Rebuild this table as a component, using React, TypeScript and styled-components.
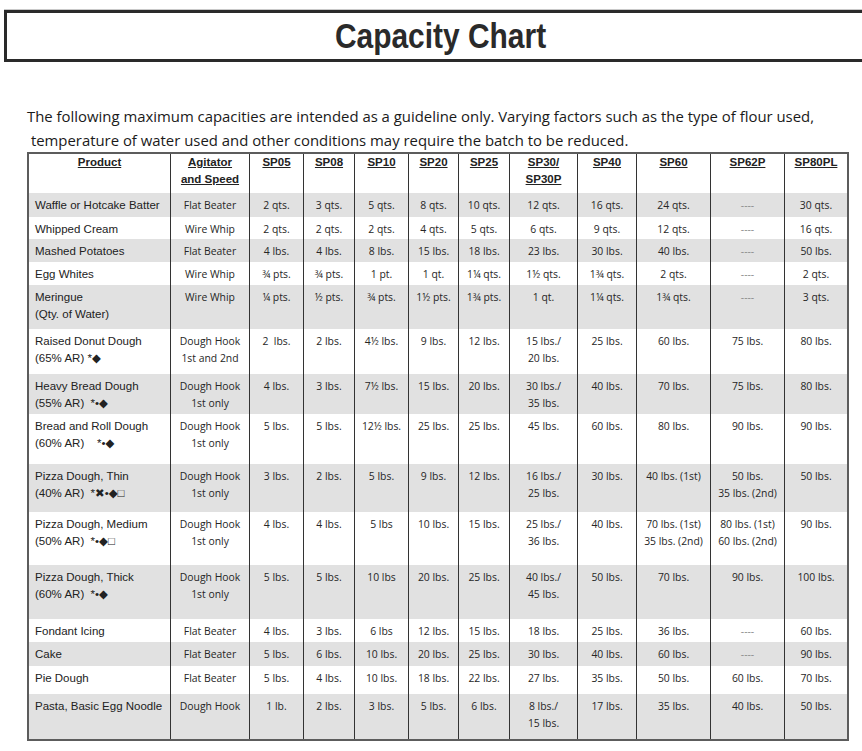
import React from 'react';
import styled, { createGlobalStyle } from 'styled-components';

interface ChartRow {
  product: string;
  agitator: string;
  values: string[];
  height: number;
}

const GlobalStyle = createGlobalStyle`
  html, body {
    margin: 0;
    padding: 0;
    background: #fff;
  }
`;

const Page = styled.div`
  width: 862px;
  height: 751px;
  overflow: hidden;
  padding-top: 10px;
  box-sizing: border-box;
`;

const TitleBar = styled.header`
  margin-left: 4px;
  width: 873px;
  height: 52px;
  box-sizing: border-box;
  border: 3px solid #2a2a2a;
  box-shadow: 0 -1px 0 #c9c9c9;
  display: flex;
  align-items: center;
  justify-content: center;
`;

// no narrow face installed, so the bold sans is squeezed to the condensed look
const Title = styled.h1`
  margin: 0;
  display: inline-block;
  transform: scaleX(0.855);
  font-family: 'Liberation Sans', Arial, sans-serif;
  font-weight: 700;
  font-size: 35px;
  line-height: 40px;
  color: #2a2a2a;
`;

const Intro = styled.p`
  margin: 42px 0 0 27px;
  font-family: 'Open Sans', sans-serif;
  font-size: 14.9px;
  line-height: 24px;
  color: #1a1a1a;
  white-space: nowrap;
`;

const Chart = styled.table`
  margin-left: 27px;
  width: 822px;
  table-layout: fixed;
  border-collapse: separate;
  border-spacing: 0;
  border: 2px solid #5c5c5c;
`;

const HeadRow = styled.tr`
  height: 39px;
  background: #fff;
`;

const HeadCell = styled.th`
  border-left: 1px solid #333;
  &:first-child {
    border-left: none;
  }
  padding: 0 2px;
  vertical-align: top;
  font-family: 'Liberation Sans', Arial, sans-serif;
  font-weight: 700;
  font-size: 11.5px;
  line-height: 17px;
  text-decoration: underline;
  text-underline-offset: 1px;
  color: #222;
`;

const Row = styled.tr<{ $shade: boolean; $h: number }>`
  height: ${p => p.$h}px;
  background: ${p => (p.$shade ? '#e1e1e1' : '#fff')};
`;

const ProductCell = styled.td`
  padding: 4px 2px 0 6px;
  vertical-align: top;
  text-align: left;
  white-space: pre;
  font-family: 'Liberation Sans', Arial, 'DejaVu Sans', sans-serif;
  font-size: 11.5px;
  line-height: 17px;
  color: #222;
`;

const ValueCell = styled.td<{ $muted?: boolean }>`
  border-left: 1px solid #333;
  padding: 4px 1px 0;
  vertical-align: top;
  text-align: center;
  white-space: pre;
  font-family: 'Open Sans', sans-serif;
  font-size: 10.4px;
  line-height: 17px;
  color: ${p => (p.$muted ? '#8a8a8a' : '#262626')};
`;

const columnWidths = [141, 79, 54, 51, 54, 50, 51, 68, 59, 74, 74, 63];

const headers = [
  'Product',
  'Agitator\nand Speed',
  'SP05',
  'SP08',
  'SP10',
  'SP20',
  'SP25',
  'SP30/\nSP30P',
  'SP40',
  'SP60',
  'SP62P',
  'SP80PL',
];

const rows: ChartRow[] = [
  {
    product: 'Waffle or Hotcake Batter',
    agitator: 'Flat Beater',
    values: ['2 qts.', '3 qts.', '5 qts.', '8 qts.', '10 qts.', '12 qts.', '16 qts.', '24 qts.', '----', '30 qts.'],
    height: 24,
  },
  {
    product: 'Whipped Cream',
    agitator: 'Wire Whip',
    values: ['2 qts.', '2 qts.', '2 qts.', '4 qts.', '5 qts.', '6 qts.', '9 qts.', '12 qts.', '----', '16 qts.'],
    height: 22,
  },
  {
    product: 'Mashed Potatoes',
    agitator: 'Flat Beater',
    values: ['4 lbs.', '4 lbs.', '8 lbs.', '15 lbs.', '18 lbs.', '23 lbs.', '30 lbs.', '40 lbs.', '----', '50 lbs.'],
    height: 23,
  },
  {
    product: 'Egg Whites',
    agitator: 'Wire Whip',
    values: ['¾ pts.', '¾ pts.', '1 pt.', '1 qt.', '1¼ qts.', '1½ qts.', '1¾ qts.', '2 qts.', '----', '2 qts.'],
    height: 23,
  },
  {
    product: 'Meringue\n(Qty. of Water)',
    agitator: 'Wire Whip',
    values: ['¼ pts.', '½ pts.', '¾ pts.', '1½ pts.', '1¾ pts.', '1 qt.', '1¼ qts.', '1¾ qts.', '----', '3 qts.'],
    height: 44,
  },
  {
    product: 'Raised Donut Dough\n(65% AR) *◆',
    agitator: 'Dough Hook\n1st and 2nd',
    values: ['2  lbs.', '2 lbs.', '4½ lbs.', '9 lbs.', '12 lbs.', '15 lbs./\n20 lbs.', '25 lbs.', '60 lbs.', '75 lbs.', '80 lbs.'],
    height: 45,
  },
  {
    product: 'Heavy Bread Dough\n(55% AR)  *•◆',
    agitator: 'Dough Hook\n1st only',
    values: ['4 lbs.', '3 lbs.', '7½ lbs.', '15 lbs.', '20 lbs.', '30 lbs./\n35 lbs.', '40 lbs.', '70 lbs.', '75 lbs.', '80 lbs.'],
    height: 40,
  },
  {
    product: 'Bread and Roll Dough\n(60% AR)    *•◆',
    agitator: 'Dough Hook\n1st only',
    values: ['5 lbs.', '5 lbs.', '12½ lbs.', '25 lbs.', '25 lbs.', '45 lbs.', '60 lbs.', '80 lbs.', '90 lbs.', '90 lbs.'],
    height: 50,
  },
  {
    product: 'Pizza Dough, Thin\n(40% AR)  *✖•◆□',
    agitator: 'Dough Hook\n1st only',
    values: ['3 lbs.', '2 lbs.', '5 lbs.', '9 lbs.', '12 lbs.', '16 lbs./\n25 lbs.', '30 lbs.', '40 lbs. (1st)', '50 lbs.\n35 lbs. (2nd)', '50 lbs.'],
    height: 48,
  },
  {
    product: 'Pizza Dough, Medium\n(50% AR)  *•◆□',
    agitator: 'Dough Hook\n1st only',
    values: ['4 lbs.', '4 lbs.', '5 lbs', '10 lbs.', '15 lbs.', '25 lbs./\n36 lbs.', '40 lbs.', '70 lbs. (1st)\n35 lbs. (2nd)', '80 lbs. (1st)\n60 lbs. (2nd)', '90 lbs.'],
    height: 53,
  },
  {
    product: 'Pizza Dough, Thick\n(60% AR)  *•◆',
    agitator: 'Dough Hook\n1st only',
    values: ['5 lbs.', '5 lbs.', '10 lbs', '20 lbs.', '25 lbs.', '40 lbs./\n45 lbs.', '50 lbs.', '70 lbs.', '90 lbs.', '100 lbs.'],
    height: 54,
  },
  {
    product: 'Fondant Icing',
    agitator: 'Flat Beater',
    values: ['4 lbs.', '3 lbs.', '6 lbs', '12 lbs.', '15 lbs.', '18 lbs.', '25 lbs.', '36 lbs.', '----', '60 lbs.'],
    height: 23,
  },
  {
    product: 'Cake',
    agitator: 'Flat Beater',
    values: ['5 lbs.', '6 lbs.', '10 lbs.', '20 lbs.', '25 lbs.', '30 lbs.', '40 lbs.', '60 lbs.', '----', '90 lbs.'],
    height: 24,
  },
  {
    product: 'Pie Dough',
    agitator: 'Flat Beater',
    values: ['5 lbs.', '4 lbs.', '10 lbs.', '18 lbs.', '22 lbs.', '27 lbs.', '35 lbs.', '50 lbs.', '60 lbs.', '70 lbs.'],
    height: 28,
  },
  {
    product: 'Pasta, Basic Egg Noodle',
    agitator: 'Dough Hook',
    values: ['1 lb.', '2 lbs.', '3 lbs.', '5 lbs.', '6 lbs.', '8 lbs./\n15 lbs.', '17 lbs.', '35 lbs.', '40 lbs.', '50 lbs.'],
    height: 45,
  },
];

export default function App() {
  return (
    <>
      <GlobalStyle />
      <Page>
        <TitleBar>
          <Title>Capacity Chart</Title>
        </TitleBar>
        <Intro>
          The following maximum capacities are intended as a guideline only. Varying factors such as the type of flour used,
          <br />
          {'\u00a0'}temperature of water used and other conditions may require the batch to be reduced.
        </Intro>
        <Chart>
          <colgroup>
            {columnWidths.map((w, i) => (
              <col key={i} style={{ width: w }} />
            ))}
          </colgroup>
          <thead>
            <HeadRow>
              {headers.map(h => (
                <HeadCell key={h}>
                  {h.split('\n').map((line, i) => (
                    <React.Fragment key={i}>
                      {i > 0 && <br />}
                      {line}
                    </React.Fragment>
                  ))}
                </HeadCell>
              ))}
            </HeadRow>
          </thead>
          <tbody>
            {rows.map((row, i) => (
              <Row key={row.product} $shade={i % 2 === 0} $h={row.height}>
                <ProductCell>{row.product}</ProductCell>
                <ValueCell>{row.agitator}</ValueCell>
                {row.values.map((v, j) => (
                  <ValueCell key={j} $muted={v === '----'}>
                    {v}
                  </ValueCell>
                ))}
              </Row>
            ))}
          </tbody>
        </Chart>
      </Page>
    </>
  );
}
